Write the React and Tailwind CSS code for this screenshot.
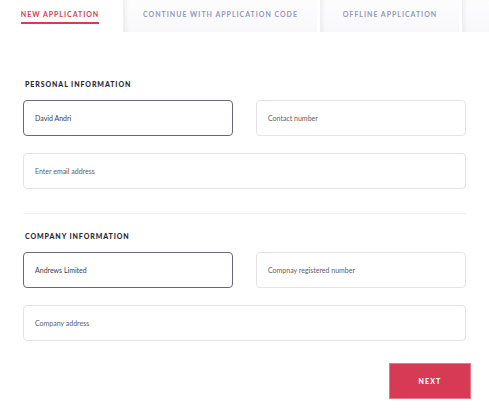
import React from 'react';

const tabs = [
  { label: 'NEW APPLICATION', w: 'w-[120px]', active: true },
  { label: 'CONTINUE WITH APPLICATION CODE', w: 'w-[194px]' },
  { label: 'OFFLINE APPLICATION', w: 'w-[139px]' },
  { label: '', w: 'flex-1' },
];

const Field = ({ value, placeholder, filled, className = '' }) => (
  <div
    className={`h-[36px] rounded-[4px] border bg-white flex items-center px-[11px] text-[7px] ${
      filled ? 'border-[#6e6579] text-[#3f3b45]' : 'border-[#e3e2ea] text-[#5f5c63]'
    } ${className}`}
  >
    {value || placeholder}
  </div>
);

const SectionTitle = ({ children }) => (
  <h2 className="text-[7px] leading-[10px] font-black tracking-[0.13em] text-[#2a2533] pl-[2px]">{children}</h2>
);

export default function App() {
  return (
    <div className="w-[489px] h-[417px] bg-white font-['Lato',sans-serif] overflow-hidden">
      {/* Tabs */}
      <div className="flex h-[32px]">
        {tabs.map((t, i) => (
          <div
            key={i}
            className={`${t.w} h-full flex items-center justify-center ${
              t.active
                ? 'bg-white'
                : 'bg-gradient-to-b from-[#fdfdfe] to-[#f8f8fa] shadow-[inset_4px_0_5px_-3px_rgba(0,0,0,0.07)] border-l border-[#f0f0f3] ml-[3px]'
            }`}
          >
            {t.label && (
              <span
                className={`text-[7px] leading-[10px] font-bold tracking-[0.14em] pt-[1px] pb-[3px] ${
                  t.active ? 'text-[#d63a55] border-b-2 border-[#d63a55]' : 'text-[#9497b8] border-b-2 border-transparent'
                }`}
              >
                {t.label}
              </span>
            )}
          </div>
        ))}
      </div>

      <div className="px-[23px] pt-[47px]">
        <SectionTitle>PERSONAL INFORMATION</SectionTitle>
        <div className="grid grid-cols-2 gap-x-[23px] mt-[11px] w-[443px]">
          <Field value="David Andri" filled />
          <Field placeholder="Contact number" />
        </div>
        <Field placeholder="Enter email address" className="mt-[17px] w-[443px]" />

        <div className="h-px bg-[#f1f1f4] w-[443px] mt-[24px]" />

        <div className="mt-[17px]">
          <SectionTitle>COMPANY INFORMATION</SectionTitle>
        </div>
        <div className="grid grid-cols-2 gap-x-[23px] mt-[11px] w-[443px]">
          <Field value="Andrews Limited" filled />
          <Field placeholder="Compnay registered number" />
        </div>
        <Field placeholder="Company address" className="mt-[17px] w-[443px]" />

        <div className="flex justify-end mt-[22px] w-[448px]">
          <button className="w-[82px] h-[36px] bg-[#d63a55] border border-[#e7798c] text-white text-[7px] font-black tracking-[0.16em]">
            NEXT
          </button>
        </div>
      </div>
    </div>
  );
}
